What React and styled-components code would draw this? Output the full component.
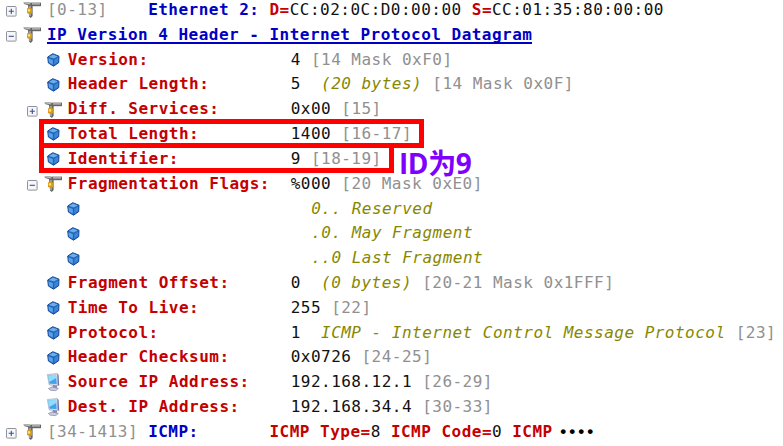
import React from 'react';
import styled, { createGlobalStyle } from 'styled-components';

const Global = createGlobalStyle`
  body { margin: 0; background: #fff; overflow: hidden; }
`;

const Page = styled.main`
  position: relative;
  width: 783px;
  height: 446px;
  overflow: hidden;
  background: #fff;
  font: 16px/24.82px 'DejaVu Sans Mono', monospace;
  letter-spacing: 0.48px;
`;

const Tree = styled.div`
  display: flex;
  flex-direction: column;
  margin-top: -2px;
`;

const Row = styled.div`
  display: flex;
  align-items: center;
  height: 24.82px;
  flex: none;
  padding-left: ${({ $level }) => 6 + $level * 20.7}px;
  white-space: pre;
`;

const Toggle = styled.svg`
  flex: none;
  width: 11px;
  height: 11px;
  margin: 3px 6px 0 0;
`;

const ToggleGap = styled.span`
  flex: none;
  width: 17px;
`;

const IconCell = styled.span`
  flex: none;
  display: flex;
  justify-content: center;
  width: 19px;
  margin-right: 5px;
`;

const Label = styled.span`
  flex: none;
  width: ${({ $level }) => ($level === 2 ? 202.6 : $level === 1 ? 223 : 0)}px;
  color: #c40000;
  font-weight: bold;
`;

const Run = styled.span`
  color: ${({ $kind }) =>
    ({ range: '#909090', note: '#878700', key: '#c40000', proto: '#0000c4', value: '#111' })[$kind]};
  font-weight: ${({ $kind }) => ($kind === 'key' || $kind === 'proto' ? 'bold' : 'normal')};
  font-style: ${({ $kind }) => ($kind === 'note' ? 'italic' : 'normal')};
`;

const Heading = styled.span`
  height: 20px;
  margin-bottom: 1.5px;
  line-height: 21px;
  box-sizing: border-box;
  border-bottom: 2px solid #0000c4;
  color: #0000c4;
  font-weight: bold;
`;

const Dots = styled.span`
  margin-left: 7.5px;
  font: bold 17px/22px 'Liberation Sans', sans-serif;
  letter-spacing: 3.1px;
  color: #000;
`;

const Highlight = styled.div`
  position: absolute;
  box-sizing: border-box;
  left: 39px;
  top: ${({ $top }) => $top}px;
  width: ${({ $width }) => $width}px;
  height: ${({ $height }) => $height}px;
  border: 5px solid #f00;
`;

const Note = styled.div`
  position: absolute;
  left: 399px;
  top: 149px;
  font: bold 28px/28px 'Open Sans', 'Noto Sans CJK SC', sans-serif;
  letter-spacing: -0.4px;
  color: #8000ff;
  white-space: nowrap;
`;

const Expander = ({ open }) => (
  <Toggle viewBox="0 0 11 11">
    <rect x="0.5" y="0.5" width="9.6" height="9.6" rx="0.8" fill="#f6f7f9" stroke="#8f9297" />
    <path d={open ? 'M2.7 5.3h5.2' : 'M2.7 5.3h5.2M5.3 2.7v5.2'} stroke="#3c50a0" strokeWidth="1.1" />
  </Toggle>
);

const Tool = () => (
  <svg width="19" height="18" viewBox="0 0 19 18">
    <path d="M.5 1.2 7 1.6l2 .6V5L6 4.6 1 3z" fill="#777" />
    <path d="M1 1.8 7 2.8" stroke="#ccc" strokeWidth=".9" />
    <path d="M8 1.6h10v3.6H8z" fill="#666" />
    <path d="M9 2.9h8" stroke="#c8c8c4" strokeWidth="1.2" />
    <path d="M5 4h4.6v11l-1.8 2L6 15.4z" fill="#666" />
    <path d="M7 5v10" stroke="#bbb" strokeWidth="1.3" />
    <path d="M4 7.6 6 6.8l3 .6v5l-2.6.4L4 12z" fill="#d49a13" />
    <path d="M4.8 8.2h2.4v2.4H4.8z" fill="#ffe07a" />
  </svg>
);

const Cube = () => (
  <svg width="13" height="14" viewBox="0 0 13 14">
    <path d="M.7 4 5.8.7l6.2 2.5-.3 6.5-5.2 3.5-5.1-3.2z" fill="#2264b8" stroke="#174a9c" />
    <path d="M1.8 4 6 1.4l4.8 2-4 2.2z" fill="#6aaeea" />
    <path d="m1.4 5.2 4.4 1.9v4.7L2 9.5z" fill="#5aa2e6" />
    <path d="m7.3 6.8 3.9-2.4-.2 4.8-3.7 2.5z" fill="#3c86d8" />
  </svg>
);

const Monitor = () => (
  <svg width="15" height="19" viewBox="0 0 15 19">
    <path d="m1.3 1.5 10-1 1.5 12.2-9.6-.7z" fill="#d5dce9" stroke="#a7aec4" strokeWidth=".7" />
    <path d="m2 2.4 8-.7.7 9.4-7.2-.4z" fill="#3fa4ec" />
    <path d="m2 2.4 8-.7.2 3.2-6.9 4z" fill="#91dcfb" />
    <path d="m11.4.7 1.2 1 .6 11-1.6-1z" fill="#7475ad" />
    <path d="m7 12 4 .6v2.6L6.3 15z" fill="#898bb5" />
    <path d="M2.4 15.5 6 14l6.4 1.4-2.6 2.2-5.6-.4z" fill="#c9cddd" stroke="#8e91b4" strokeWidth=".8" />
  </svg>
);

const icons = { tool: Tool, cube: Cube, host: Monitor };

// Each row: level, icon, expander state, label and coloured runs.
const rows = [
  { level: 0, icon: 'tool', open: false, runs: [['range', '[0-13]'], ['proto', '    Ethernet 2: '], ['key', 'D='], ['value', 'CC:02:0C:D0:00:00 '], ['key', 'S='], ['value', 'CC:01:35:80:00:00']] },
  { level: 0, icon: 'tool', open: true, heading: 'IP Version 4 Header - Internet Protocol Datagram' },
  { level: 1, icon: 'cube', label: 'Version:', runs: [['value', '4 '], ['range', '[14 Mask 0xF0]']] },
  { level: 1, icon: 'cube', label: 'Header Length:', runs: [['value', '5  '], ['note', '(20 bytes) '], ['range', '[14 Mask 0x0F]']] },
  { level: 1, icon: 'tool', open: false, label: 'Diff. Services:', runs: [['value', '0x00 '], ['range', '[15]']] },
  { level: 1, icon: 'cube', label: 'Total Length:', runs: [['value', '1400 '], ['range', '[16-17]']] },
  { level: 1, icon: 'cube', label: 'Identifier:', runs: [['value', '9 '], ['range', '[18-19]']] },
  { level: 1, icon: 'tool', open: true, label: 'Fragmentation Flags:', runs: [['value', '%000 '], ['range', '[20 Mask 0xE0]']] },
  { level: 2, icon: 'cube', label: '', runs: [['note', '  0.. Reserved']] },
  { level: 2, icon: 'cube', label: '', runs: [['note', '  .0. May Fragment']] },
  { level: 2, icon: 'cube', label: '', runs: [['note', '  ..0 Last Fragment']] },
  { level: 1, icon: 'cube', label: 'Fragment Offset:', runs: [['value', '0  '], ['note', '(0 bytes) '], ['range', '[20-21 Mask 0x1FFF]']] },
  { level: 1, icon: 'cube', label: 'Time To Live:', runs: [['value', '255 '], ['range', '[22]']] },
  { level: 1, icon: 'cube', label: 'Protocol:', runs: [['value', '1  '], ['note', 'ICMP - Internet Control Message Protocol '], ['range', '[23]']] },
  { level: 1, icon: 'cube', label: 'Header Checksum:', runs: [['value', '0x0726 '], ['range', '[24-25]']] },
  { level: 1, icon: 'host', label: 'Source IP Address:', runs: [['value', '192.168.12.1 '], ['range', '[26-29]']] },
  { level: 1, icon: 'host', label: 'Dest. IP Address:', runs: [['value', '192.168.34.4 '], ['range', '[30-33]']] },
  { level: 0, icon: 'tool', open: false, dots: true, runs: [['range', '[34-1413] '], ['proto', 'ICMP:       '], ['key', 'ICMP Type='], ['value', '8 '], ['key', 'ICMP Code='], ['value', '0 '], ['key', 'ICMP']] },
];

function TreeRow({ level, icon, open, label, heading, runs = [], dots }) {
  const Icon = icons[icon];
  return (
    <Row $level={level}>
      {open === undefined ? <ToggleGap /> : <Expander open={open} />}
      <IconCell><Icon /></IconCell>
      {heading && <Heading>{heading}</Heading>}
      {label !== undefined && <Label $level={level}>{label}</Label>}
      {runs.map(([kind, text], i) => <Run key={i} $kind={kind}>{text}</Run>)}
      {dots && <Dots>••••</Dots>}
    </Row>
  );
}

export default function App() {
  return (
    <Page>
      <Global />
      <Tree>
        {rows.map((row, i) => <TreeRow key={i} {...row} />)}
      </Tree>
      <Highlight $top={119} $width={385} $height={29} />
      <Highlight $top={143} $width={355} $height={30} />
      <Note>ID为9</Note>
    </Page>
  );
}
